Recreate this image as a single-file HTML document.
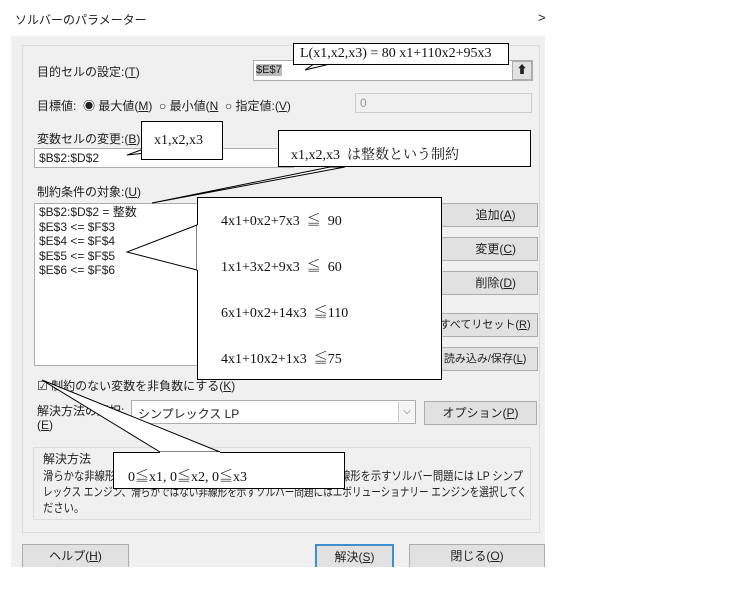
<!DOCTYPE html>
<html><head><meta charset="utf-8"><style>
*{box-sizing:border-box;margin:0;padding:0}
body{width:750px;height:599px;background:#fff;position:relative;overflow:hidden;font-family:"Liberation Sans","Noto Sans CJK JP",sans-serif;font-size:12px;color:#222}
.a{position:absolute;white-space:nowrap}
.panel{position:absolute;left:11px;top:36px;width:534px;height:531px;background:#f0f0f0}
.grp{position:absolute;left:22px;top:45px;width:518px;height:488px;border:1px solid #dcdcdc;background:#f0f0f0}
.inp{position:absolute;background:#fff;border:1px solid #adadad}
.btn{position:absolute;background:#e1e1e1;border:1px solid #adadad;text-align:center;line-height:22px;white-space:nowrap;overflow:hidden}
u{text-decoration:underline}
.cb{position:absolute;background:#fff;border:1px solid #000;font-family:"Liberation Serif","Noto Serif CJK SC",serif;font-size:14px;color:#111;white-space:nowrap}
</style></head><body>
<div class="a" style="left:15px;top:11px;font-size:12px">ソルバーのパラメーター</div>
<div class="a" style="left:538px;top:10px;font-size:13px">&gt;</div>
<div class="panel"></div>
<div class="grp"></div>
<div class="a" style="left:37px;top:63px">目的セルの設定:(<u>T</u>)</div>
<div class="inp" style="left:253px;top:60px;width:280px;height:21px"></div>
<div class="a" style="left:256px;top:64px;background:#bbb;font-size:11px">$E$7</div>
<div class="btn" style="left:512px;top:61px;width:20px;height:19px;line-height:17px;font-size:11px">⬆</div>
<div class="a" style="left:37px;top:97px">目標値: &nbsp;◉ 最大値(<u>M</u>) &nbsp;○ 最小値(<u>N</u> &nbsp;○ 指定値:(<u>V</u>)</div>
<div class="inp" style="left:355px;top:93px;width:177px;height:20px;background:#f0f0f0;border-color:#ccc;color:#999;padding:2px 4px">0</div>
<div class="a" style="left:37px;top:130px">変数セルの変更:(<u>B</u>)</div>
<div class="inp" style="left:34px;top:148px;width:260px;height:20px;padding:2px 4px">$B$2:$D$2</div>
<div class="a" style="left:37px;top:183px">制約条件の対象:(<u>U</u>)</div>
<div class="inp" style="left:34px;top:203px;width:260px;height:163px;padding:1px 4px;line-height:14.5px">$B$2:$D$2 = 整数<br>$E$3 &lt;= $F$3<br>$E$4 &lt;= $F$4<br>$E$5 &lt;= $F$5<br>$E$6 &lt;= $F$6</div>
<div class="btn" style="left:420px;top:203px;width:118px;height:24px">&nbsp;&nbsp;&nbsp;&nbsp;&nbsp;&nbsp;&nbsp;&nbsp;&nbsp;&nbsp;追加(<u>A</u>)</div>
<div class="btn" style="left:420px;top:237px;width:118px;height:24px">&nbsp;&nbsp;&nbsp;&nbsp;&nbsp;&nbsp;&nbsp;&nbsp;&nbsp;&nbsp;変更(<u>C</u>)</div>
<div class="btn" style="left:420px;top:271px;width:118px;height:24px">&nbsp;&nbsp;&nbsp;&nbsp;&nbsp;&nbsp;&nbsp;&nbsp;&nbsp;&nbsp;削除(<u>D</u>)</div>
<div class="btn" style="left:420px;top:313px;width:118px;height:24px;font-size:11px">&nbsp;&nbsp;&nbsp;&nbsp;すべてリセット(<u>R</u>)</div>
<div class="btn" style="left:420px;top:347px;width:118px;height:24px;font-size:11px">&nbsp;&nbsp;&nbsp;&nbsp;読み込み/保存(<u>L</u>)</div>
<div class="a" style="left:37px;top:377px">☑ 制約のない変数を非負数にする(<u>K</u>)</div>
<div class="a" style="left:37px;top:402px">解決方法の選択:</div>
<div class="a" style="left:37px;top:418px">(<u>E</u>)</div>
<div class="inp" style="left:131px;top:400px;width:285px;height:24px;padding:4px 6px">シンプレックス LP</div>
<div class="a" style="left:398px;top:402px;width:17px;height:20px;border-left:1px solid #ccc;background:#f5f5f5;text-align:center;font-size:10px;line-height:20px;color:#555">⌵</div>
<div class="btn" style="left:424px;top:401px;width:113px;height:24px">オプション(<u>P</u>)</div>
<div style="position:absolute;left:33px;top:447px;width:498px;height:73px;border:1px solid #dcdcdc"></div>
<div class="a" style="left:43px;top:450px">解決方法</div>
<div class="a" style="left:43px;top:467px;transform:scaleX(0.86);transform-origin:0 0">滑らかな非線形を示すソルバー問題には GRG 非線形エンジン、線形を示すソルバー問題には LP シンプ</div>
<div class="a" style="left:43px;top:483px;transform:scaleX(0.80);transform-origin:0 0">レックス エンジン、滑らかではない非線形を示すソルバー問題にはエボリューショナリー エンジンを選択してく</div>
<div class="a" style="left:43px;top:499px;transform:scaleX(0.86);transform-origin:0 0">ださい。</div>
<div class="btn" style="left:22px;top:544px;width:107px;height:23px;border-bottom:none">ヘルプ(<u>H</u>)</div>
<div class="btn" style="left:315px;top:544px;width:79px;height:23px;border:2px solid #3c8fd0;border-bottom:none">解決(<u>S</u>)</div>
<div class="btn" style="left:409px;top:544px;width:136px;height:23px;border-bottom:none">閉じる(<u>O</u>)</div>

<svg style="position:absolute;left:0;top:0" width="750" height="599">
<g fill="#fff" stroke="#000" stroke-width="1">
<polygon points="314,64 305,70 330,64"/>
<polygon points="155,145 127,155 155,152"/>
<polygon points="330,167 152,203 345,167"/>
<polygon points="197,225 127,252 197,270"/>
<polygon points="160,452 42,380 220,452"/>
</g>
</svg>
<div class="cb" style="left:293px;top:43px;width:216px;height:22px;padding:2px 6px">L(x1,x2,x3) = 80 x1+110x2+95x3</div>
<div class="cb" style="left:141px;top:121px;width:82px;height:39px;padding:11px 12px">x1,x2,x3</div>
<div class="cb" style="left:278px;top:130px;width:253px;height:37px;padding:13px 12px">x1,x2,x3 &nbsp;は整数という制約</div>
<div class="cb" style="left:197px;top:197px;width:245px;height:183px;padding:1px 24px 0;line-height:46px;border-left:none">4x1+0x2+7x3 &nbsp;≦ &nbsp;90<br>1x1+3x2+9x3 &nbsp;≦ &nbsp;60<br>6x1+0x2+14x3 &nbsp;≦110<br>4x1+10x2+1x3 &nbsp;≦75</div>
<div style="position:absolute;left:197px;top:197px;width:1px;height:28px;background:#000"></div>
<div style="position:absolute;left:197px;top:270px;width:1px;height:110px;background:#000"></div>
<div class="cb" style="left:113px;top:452px;width:232px;height:37px;padding:14px 14px;border-top:none">0≦x1, 0≦x2, 0≦x3</div>
<div style="position:absolute;left:113px;top:452px;width:47px;height:1px;background:#000"></div>
<div style="position:absolute;left:220px;top:452px;width:125px;height:1px;background:#000"></div>
</body></html>
